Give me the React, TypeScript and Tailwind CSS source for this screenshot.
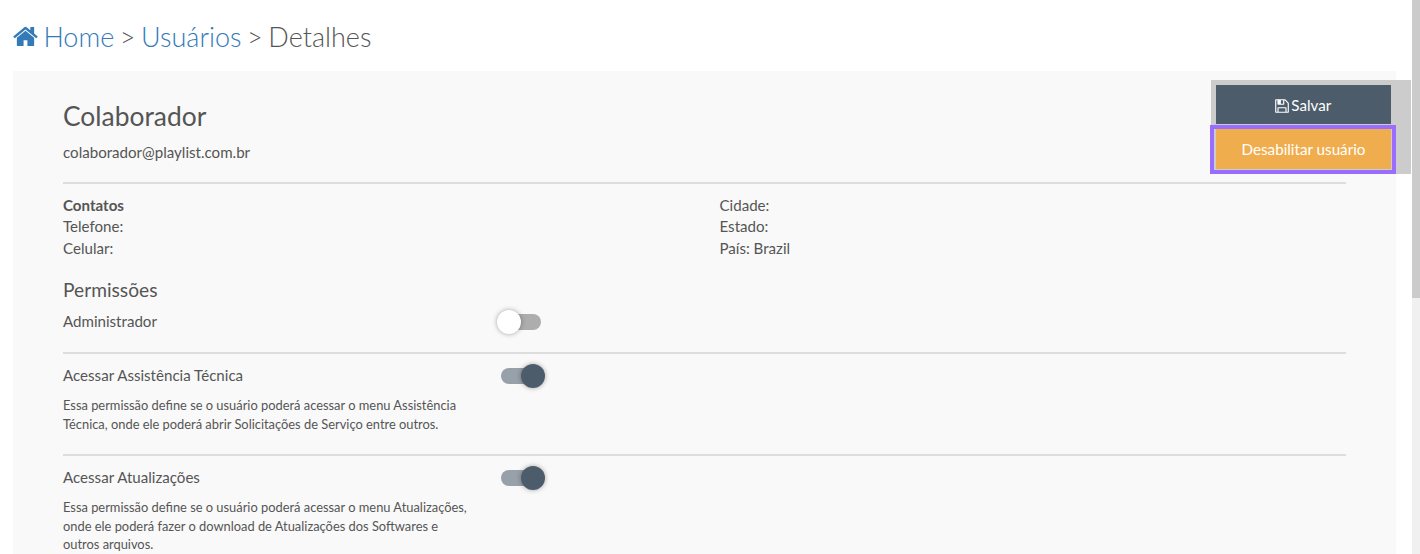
import { clsx } from "clsx";

const permissions = [
  {
    title: "Acessar Assistência Técnica",
    description:
      "Essa permissão define se o usuário poderá acessar o menu Assistência Técnica, onde ele poderá abrir Solicitações de Serviço entre outros.",
  },
  {
    title: "Acessar Atualizações",
    description:
      "Essa permissão define se o usuário poderá acessar o menu Atualizações, onde ele poderá fazer o download de Atualizações dos Softwares e outros arquivos.",
  },
];

function HomeIcon() {
  return (
    <svg viewBox="64 0 1664 1792" className="h-[27px] w-[25px] shrink-0" fill="currentColor">
      <path d="M1472 992v480q0 26-19 45t-45 19h-384v-384h-256v384h-384q-26 0-45-19t-19-45v-480q0-1 .5-3t.5-3l575-474 575 474q1 2 1 6zm223-69l-62 74q-8 9-21 11h-3q-13 0-21-7l-692-577-692 577q-12 8-24 7-13-2-21-11l-62-74q-8-10-7-23.500t11-21.500l719-599q32-26 76-26t76 26l244 204v-195q0-14 9-23t23-9h192q14 0 23 9t9 23v408l219 182q10 8 11 21.500t-7 23.500z" />
    </svg>
  );
}

function SaveIcon() {
  return (
    <svg viewBox="128 0 1536 1792" className="h-[16px] w-[14px] shrink-0" fill="currentColor">
      <path d="M512 1536h768v-384h-768v384zm896 0h128v-896q0-14-10-38.500t-20-34.500l-281-281q-10-10-34-20t-39-10v416q0 40-28 68t-68 28h-576q-40 0-68-28t-28-68v-416h-128v1280h128v-416q0-40 28-68t68-28h832q40 0 68 28t28 68v416zm-384-928v-320q0-13-9.500-22.500t-22.500-9.500h-192q-13 0-22.500 9.500t-9.500 22.500v320q0 13 9.500 22.500t22.500 9.500h192q13 0 22.500-9.500t9.500-22.500zm640 32v928q0 40-28 68t-68 28h-1344q-40 0-68-28t-28-68v-1344q0-40 28-68t68-28h928q40 0 88 20t76 48l280 280q28 28 48 76t20 88z" />
    </svg>
  );
}

function Toggle({ on = false }: { on?: boolean }) {
  return (
    <button
      role="switch"
      aria-checked={on}
      className={clsx("relative h-4 w-10 rounded-full", on ? "bg-[#98a0a9]" : "bg-[#adadad]")}
    >
      <span
        className={clsx(
          "absolute -top-1 size-6 rounded-full shadow-[0_0_5px_rgba(0,0,0,0.35)]",
          on ? "left-5 bg-[#4d5c6b]" : "-left-1 bg-white",
        )}
      />
    </button>
  );
}

export default function App() {
  return (
    <div className="flex h-[554px] overflow-hidden bg-white font-['Lato',sans-serif] text-[15.1px] leading-[21.43px] text-[#555]">
      <main className="w-[1412px] shrink-0 pl-[13px]">
        <h1 className="flex h-[71px] items-center gap-[5.6px] pt-0.5 text-[27px] font-light">
          <a href="#" className="flex items-center gap-[5.4px] text-[#337ab7]">
            <HomeIcon />
            Home
          </a>
          <span>&gt;</span>
          <a href="#" className="text-[#337ab7]">Usuários</a>
          <span>&gt;</span>
          <span>Detalhes</span>
        </h1>

        <section className="relative h-[600px] w-[1383px] bg-[#f9f9f9] px-[50px]">
          <header className="h-[113px] border-b-2 border-[#ddd] pt-[30px]">
            <h2 className="text-[26.4px] leading-[30px]">Colaborador</h2>
            <p className="mt-[11px]">colaborador@playlist.com.br</p>
          </header>

          <div className="grid grid-cols-[656.5px_1fr] pt-[11px]">
            <div>
              <p className="font-bold">Contatos</p>
              <p>Telefone:</p>
              <p>Celular:</p>
            </div>
            <div>
              <p>Cidade:</p>
              <p>Estado:</p>
              <p>País: Brazil</p>
            </div>
          </div>

          <h3 className="mt-[20px] text-[19.2px] leading-[21px]">Permissões</h3>
          <div className="mt-[10px] flex h-[44px] border-b-2 border-[#ddd]">
            <span className="w-[438px] pt-px">Administrador</span>
            <div className="pt-1">
              <Toggle />
            </div>
          </div>

          {permissions.map((permission) => (
            <div key={permission.title} className="h-[102px] border-b-2 border-[#ddd] pt-[11px]">
              <div className="flex h-[22px]">
                <span className="w-[438px]">{permission.title}</span>
                <div className="pt-[3px]">
                  <Toggle on />
                </div>
              </div>
              <p className="mt-[9px] w-[410px] text-[12.87px] leading-[18.4px]">{permission.description}</p>
            </div>
          ))}

          <div className="absolute top-[9px] left-[1198px] h-[94px] w-[200px] bg-[#ccc] pt-[5px] pl-[5px] text-white">
            <button className="flex h-[39px] w-[175px] items-center justify-center gap-[2.5px] bg-[#4d5c6b] pt-0.5 pr-px">
              <SaveIcon />
              Salvar
            </button>
            <div className="mt-px -ml-1.5 h-[49px] w-[186px] border-4 border-[#9b6dff] pr-px pb-px pl-0.5">
              <button className="flex h-full w-full items-center justify-center bg-[#f0ad4e] pt-0.5 text-[15.2px]">
                Desabilitar usuário
              </button>
            </div>
          </div>
        </section>
      </main>

      <div className="w-2 shrink-0 bg-[#f0f0f0]">
        <div className="h-[298px] bg-[#cbcbcb]" />
      </div>
    </div>
  );
}
